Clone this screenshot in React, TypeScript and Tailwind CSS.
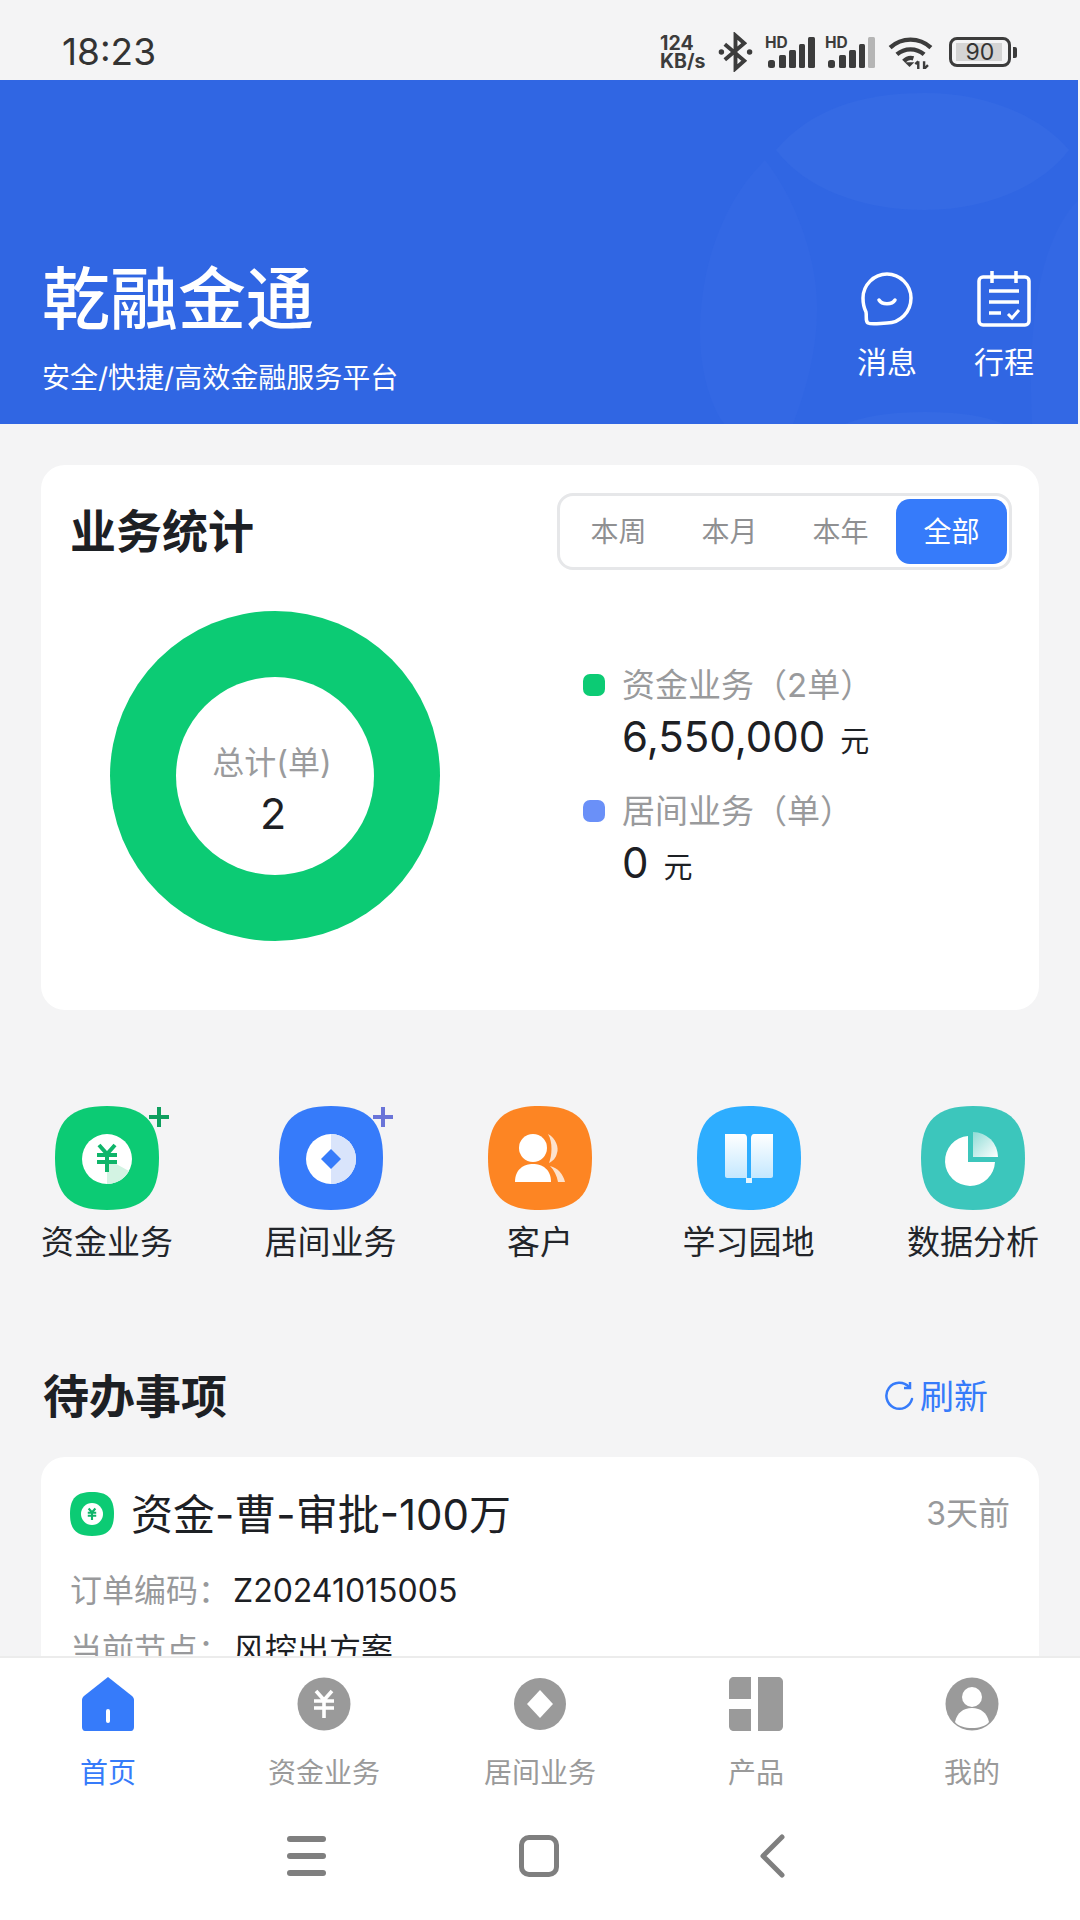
import React from "react";

const CJK = "font-['Inter','Noto_Sans_CJK_SC',sans-serif]";

function Squircle({ fill, children }: { fill: string; children?: React.ReactNode }) {
  return (
    <svg viewBox="0 0 104 104" className="w-[104px] h-[104px] block">
      <path d="M52 0C88 0 104 14 104 52C104 90 88 104 52 104C16 104 0 90 0 52C0 14 16 0 52 0Z" fill={fill} />
      {children}
    </svg>
  );
}

function Yen({ color, w = 3.6 }: { color: string; w?: number }) {
  return (
    <g stroke={color} strokeWidth={w} fill="none" strokeLinecap="butt">
      <path d="M-8 -13L0 -4L8 -13M-10 -3H10M-10 4H10M0 -4V14" />
    </g>
  );
}

function QuickIcon({ label, plus, center, children, fill }: { label: string; plus?: string; center: string; children?: React.ReactNode; fill: string }) {
  return (
    <div className={`flex flex-col items-center ${center}`}>
      <div className="relative w-[104px] h-[104px]">
        <Squircle fill={fill}>{children}</Squircle>
        {plus && (
          <svg viewBox="0 0 20 20" className="absolute right-[-10px] top-[1px] w-[20px] h-[20px]">
            <path d="M10 0V20M0 10H20" stroke={plus} strokeWidth="4" />
          </svg>
        )}
      </div>
      <div className="mt-[9px] text-[33px] leading-[46px] text-[#22252a] whitespace-nowrap">{label}</div>
    </div>
  );
}

function TabItem({ label, active, children }: { label: string; active?: boolean; children: React.ReactNode }) {
  return (
    <div className="flex-1 flex flex-col items-center">
      <div className="h-[54px] flex items-center justify-center">{children}</div>
      <div className={`mt-[24px] text-[28px] leading-[36px] ${active ? "text-[#367bfa]" : "text-[#9a9a9a]"}`}>{label}</div>
    </div>
  );
}

function Legend({ color, title, value }: { color: string; title: string; value: string }) {
  return (
    <div>
      <div className="flex items-center h-[48px]">
        <div className="w-[22px] h-[22px] rounded-[7px]" style={{ background: color }} />
        <div className="ml-[17px] text-[33px] text-[#999a9c] leading-[48px] whitespace-nowrap">{title}</div>
      </div>
      <div className="ml-[39px] flex items-baseline h-[56px]">
        <span className="text-[42px] leading-[56px] text-[#1d2024]">{value}</span>
        <span className="ml-[15px] text-[29px] text-[#1d2024]">元</span>
      </div>
    </div>
  );
}

function Signal({ last }: { last: string }) {
  return (
    <div className="relative w-[50px] h-[31px]">
      <span className="absolute left-[0px] top-[-3px] font-['Inter',sans-serif] font-bold text-[15.5px] leading-[18px]">HD</span>
      <svg viewBox="0 0 50 31" className="absolute inset-0 w-[50px] h-[31px]">
        <rect x="3" y="23" width="7" height="8" rx="2.5" fill="#3c3c3c" />
        <rect x="14" y="18" width="7" height="13" rx="1.5" fill="#3c3c3c" />
        <rect x="24" y="13" width="7" height="18" rx="1.5" fill="#3c3c3c" />
        <rect x="34" y="7" width="6" height="24" rx="1.5" fill="#3c3c3c" />
        <rect x="43" y="0" width="7" height="31" rx="1.5" fill={last} />
      </svg>
    </div>
  );
}

function StatusIcons() {
  return (
    <div className="flex items-center h-[40px] mr-[63px] text-[#3c3c3c]">
      <div className="w-[48px] flex flex-col items-start font-['Inter',sans-serif] font-bold text-[19.5px] leading-[18px]">
        <span>124</span>
        <span>KB/s</span>
      </div>
      <svg viewBox="0 0 36 40" className="w-[35px] h-[40px] ml-[10px]">
        <path d="M7 12L27 29L18 37V3L27 11L7 28" fill="none" stroke="#3c3c3c" strokeWidth="4" />
        <circle cx="3.5" cy="20" r="2.8" fill="#3c3c3c" />
        <circle cx="32.5" cy="20" r="2.8" fill="#3c3c3c" />
      </svg>
      <div className="ml-[12px]"><Signal last="#3c3c3c" /></div>
      <div className="ml-[10px]"><Signal last="#b5b5b5" /></div>
      <svg viewBox="0 0 46 34" className="w-[45px] h-[33px] ml-[13px]">
        <path d="M2 12C14 1 32 1 44 12" fill="none" stroke="#3c3c3c" strokeWidth="4.5" />
        <path d="M9 19C17 12 29 12 37 19" fill="none" stroke="#3c3c3c" strokeWidth="4.5" />
        <path d="M16 26C19 23 23 22 26 23" fill="none" stroke="#3c3c3c" strokeWidth="4.5" />
        <path d="M17 27H27L22 32Z" fill="#3c3c3c" />
        <path d="M31 26V34M37 26V34M28 29L31 26M37 34L41 30" stroke="#3c3c3c" strokeWidth="2.5" fill="none" />
      </svg>
      <div className="relative ml-[16px] w-[62px] h-[30px] rounded-[8px] border-[3px] border-[#3c3c3c] flex items-center justify-center">
        <div className="absolute left-[4px] top-[3px] bottom-[3px] right-[6px] bg-[#d4d4d4]" />
        <span className="relative font-['Inter',sans-serif] text-[23px] leading-[24px] text-[#333]">90</span>
      </div>
      <div className="w-[4px] h-[11px] rounded-r-[2px] bg-[#3c3c3c] ml-[2px]" />
    </div>
  );
}

function Header() {
  return (
    <div className="relative h-[344px] w-[1078px] bg-[#3066e3] overflow-hidden">
      <svg viewBox="0 0 1078 344" className="absolute inset-0 w-full h-full">
        <path d="M776 70C810 30 860 13 925 13C985 13 1040 35 1069 70C1040 108 985 130 925 130C860 130 805 108 776 70Z" fill="#356ae4" />
        <path d="M765 80C715 130 700 200 700 253C700 290 710 325 724 344H793C810 300 822 250 815 200C808 150 785 105 765 80Z" fill="#3368e4" />
        <path d="M1078 120C1040 160 1027 240 1032 344H1078Z" fill="#3368e4" />
        <path d="M845 344C865 336 890 332 925 332C960 332 985 336 1004 344Z" fill="#356ae4" />
      </svg>
      <div className="relative h-full flex justify-between">
        <div className="ml-[42px] flex flex-col pt-[179px]">
          <div className="text-[68px] leading-[80px] text-white font-medium whitespace-nowrap">乾融金通</div>
          <div className="mt-[19px] text-[28px] leading-[40px] text-white whitespace-nowrap">安全/快捷/高效金融服务平台</div>
        </div>
        <div className="flex mr-[44px] pt-[191px] gap-[57px]">
          <div className="flex flex-col items-center w-[60px]">
            <svg viewBox="0 0 54 56" className="w-[54px] h-[56px] block">
              <path d="M27 3C40 3 51 14 51 27C51 41 40 52 27 52C21 52 12 54 8 52C5 50 7 46 6 41C4 37 3 32 3 27C3 14 14 3 27 3Z" fill="none" stroke="white" strokeWidth="3.5" />
              <path d="M19 29C22 34 32 34 35 29" fill="none" stroke="white" strokeWidth="3.5" strokeLinecap="round" />
            </svg>
            <div className="mt-[15px] text-[30px] leading-[40px] text-white whitespace-nowrap">消息</div>
          </div>
          <div className="flex flex-col items-center w-[60px]">
            <svg viewBox="0 0 54 56" className="w-[54px] h-[56px] block">
              <rect x="2" y="6" width="50" height="48" rx="4" fill="none" stroke="white" strokeWidth="3.5" />
              <path d="M15 0V12M39 0V12M12 20H42M12 31H42M12 42H24" stroke="white" strokeWidth="3.5" />
              <path d="M31 43L35 47L42 39" fill="none" stroke="white" strokeWidth="3" />
            </svg>
            <div className="mt-[15px] text-[30px] leading-[40px] text-white whitespace-nowrap">行程</div>
          </div>
        </div>
      </div>
    </div>
  );
}

function StatsCard() {
  return (
    <div className="mt-[41px] mx-[41px] h-[545px] bg-white rounded-[24px] pt-[28px] px-[29px]">
      <div className="flex justify-between items-center h-[77px]">
        <div className="text-[46px] font-bold text-[#1d2024]">业务统计</div>
        <div className="mr-[-2px] w-[455px] h-[77px] rounded-[16px] border-[3px] border-[#e6e7e9] flex items-center pl-[3px] pr-[2px] text-[28px] text-[#8f9092]">
          <div className="flex-1 text-center">本周</div>
          <div className="flex-1 text-center">本月</div>
          <div className="flex-1 text-center">本年</div>
          <div className="w-[111px] h-[65px] rounded-[14px] bg-[#367bfa] text-white flex items-center justify-center">全部</div>
        </div>
      </div>
      <div className="flex mt-[41px]">
        <div className="relative ml-[40px] w-[330px] h-[330px] rounded-full bg-[#0ccb74] flex items-center justify-center">
          <div className="w-[198px] h-[198px] rounded-full bg-white flex flex-col items-center justify-center">
            <div className="text-[32px] leading-[44px] text-[#9a9b9d] mt-[28px] ml-[-6px] whitespace-nowrap">总计(单)</div>
            <div className="text-[43px] leading-[52px] text-[#1d2024] mt-[2px] ml-[-4px]">2</div>
          </div>
        </div>
        <div className="ml-[143px] pt-[50px] flex flex-col gap-[22px]">
          <Legend color="#0ccb74" title="资金业务（2单）" value="6,550,000" />
          <Legend color="#6a90f8" title="居间业务（单）" value="0" />
        </div>
      </div>
    </div>
  );
}

function QuickRow() {
  return (
    <div className="relative mt-[96px] h-[170px] mx-[41px] flex justify-between">
      <QuickIcon label="资金业务" center="w-[132px]" fill="#0ccb74" plus="#0e9f5e">
        <circle cx="52" cy="53" r="25" fill="white" />
        <path d="M52 53V78A25 25 0 0 0 74 65Z" fill="#d3f3e3" />
        <g transform="translate(52 52)"><Yen color="#0fb56a" w={4} /></g>
      </QuickIcon>
      <QuickIcon label="居间业务" center="w-[132px] ml-[-1px]" fill="#367bfa" plus="#6a74d8">
        <circle cx="52" cy="53" r="25" fill="white" />
        <path d="M52 28A25 25 0 0 1 52 78Z" fill="#d9e4fb" />
        <path d="M52 43L62 53L52 63L42 53Z" fill="#367bfa" />
      </QuickIcon>
      <QuickIcon label="客户" center="w-[104px] ml-[-1px]" fill="#fd8523">
        <circle cx="45" cy="42" r="14" fill="white" />
        <path d="M27 76C27 63 36 58 45 58C54 58 63 63 63 76Z" fill="white" />
        <path d="M60 28C68 32 71 42 69 47C68 52 65 55 61 57C64 50 65 36 60 28Z" fill="#fde2cc" />
        <path d="M62 60C70 62 75 68 77 76H70C69 70 66 64 62 60Z" fill="#fde2cc" />
      </QuickIcon>
      <QuickIcon label="学习园地" center="w-[132px] ml-[-2px]" fill="#2dadff">
        <defs>
          <linearGradient id="bk" x1="0" y1="0" x2="0" y2="1">
            <stop offset="0" stopColor="#ffffff" />
            <stop offset="1" stopColor="#c4e8ff" />
          </linearGradient>
        </defs>
        <path d="M28 28H47C49 28 50 30 50 32V72H30C29 72 28 71 28 70Z" fill="url(#bk)" />
        <path d="M76 28H57C55 28 54 30 54 32V72H74C75 72 76 71 76 70Z" fill="url(#bk)" />
        <rect x="49" y="72" width="6" height="5" fill="#e6f6ff" />
      </QuickIcon>
      <QuickIcon label="数据分析" center="w-[132px]" fill="#3cc6bc">
        <defs>
          <linearGradient id="pie" x1="0" y1="0" x2="1" y2="1">
            <stop offset="0" stopColor="#8fdcd6" />
            <stop offset="1" stopColor="#ffffff" />
          </linearGradient>
        </defs>
        <path d="M47 30V56H74A25 25 0 1 1 47 30Z" fill="white" />
        <path d="M52 26A25 25 0 0 1 77 51H52Z" fill="url(#pie)" />
      </QuickIcon>
    </div>
  );
}

function Todo() {
  return (
    <div className="mt-[89px]">
      <div className="mx-[43px] flex items-center justify-between h-[62px]">
        <div className="text-[46px] font-bold text-[#1d2024]">待办事项</div>
        <div className="flex items-center mr-[49px] text-[#367bfa] text-[34px]">
          <svg viewBox="0 0 30 32" className="w-[30px] h-[32px] mr-[6px]">
            <path d="M25 7A13 13 0 1 0 28 19" fill="none" stroke="#367bfa" strokeWidth="2.5" strokeLinecap="round" />
            <path d="M20 8H26V2" fill="none" stroke="#367bfa" strokeWidth="2.5" />
          </svg>
          刷新
        </div>
      </div>
      <div className="mt-[30px] mx-[41px] h-[300px] bg-white rounded-[24px] px-[29px] pt-[27px]">
        <div className="flex items-center h-[60px]">
          <svg viewBox="0 0 104 104" className="w-[44px] h-[44px]">
            <path d="M52 0C88 0 104 14 104 52C104 90 88 104 52 104C16 104 0 90 0 52C0 14 16 0 52 0Z" fill="#0ccb74" />
            <circle cx="52" cy="52" r="26" fill="white" />
            <g transform="translate(52 52)"><Yen color="#0fb56a" w={5} /></g>
          </svg>
          <div className="ml-[17px] text-[42px] text-[#1d2024] whitespace-nowrap">资金-曹-审批-100万</div>
          <div className="ml-auto text-[32px] text-[#98999b]">3天前</div>
        </div>
        <div className="mt-[22px] flex items-center h-[50px] text-[32px]">
          <span className="text-[#98999b] w-[163px] whitespace-nowrap">订单编码：</span>
          <span className="text-[#1d2024]">Z20241015005</span>
        </div>
        <div className="mt-[9px] flex items-center h-[50px] text-[32px]">
          <span className="text-[#98999b] w-[163px] whitespace-nowrap">当前节点：</span>
          <span className="text-[#1d2024]">风控出方案</span>
        </div>
      </div>
    </div>
  );
}

function TabBar() {
  return (
    <div className="h-[264px] shrink-0 bg-white border-t-2 border-[#ececec] flex flex-col">
      <div className="flex pt-[19px] h-[166px]">
        <TabItem label="首页" active>
          <svg viewBox="0 0 52 54" className="w-[52px] h-[54px]">
            <path d="M26 0L50 19C51 20 52 21 52 23V50C52 52 51 54 49 54H3C1 54 0 52 0 50V23C0 21 1 20 2 19Z" fill="#367bfa" />
            <rect x="24" y="32" width="4" height="14" rx="2" fill="white" />
          </svg>
        </TabItem>
        <TabItem label="资金业务">
          <svg viewBox="0 0 54 54" className="w-[54px] h-[54px]">
            <circle cx="27" cy="27" r="26.5" fill="#9a9a9a" />
            <g transform="translate(27 27)"><Yen color="white" w={3.6} /></g>
          </svg>
        </TabItem>
        <TabItem label="居间业务">
          <svg viewBox="0 0 54 54" className="w-[54px] h-[54px]">
            <circle cx="27" cy="27" r="26" fill="#9a9a9a" />
            <path d="M27 13L40 27L27 41L14 27Z" fill="white" />
          </svg>
        </TabItem>
        <TabItem label="产品">
          <svg viewBox="0 0 54 54" className="w-[54px] h-[54px]">
            <path d="M5 0H22V22H0V5C0 2 2 0 5 0Z" fill="#9a9a9a" />
            <path d="M0 32H22V54H5C2 54 0 52 0 49Z" fill="#9a9a9a" />
            <path d="M29 0H49C52 0 54 2 54 5V49C54 52 52 54 49 54H29Z" fill="#9a9a9a" />
          </svg>
        </TabItem>
        <TabItem label="我的">
          <svg viewBox="0 0 54 54" className="w-[54px] h-[54px]">
            <circle cx="27" cy="27" r="26.5" fill="#9a9a9a" />
            <circle cx="27" cy="20" r="10" fill="white" />
            <path d="M10 45C12 36 18 31 27 31C36 31 42 36 44 45C41 49 34 51 27 51C20 51 13 49 10 45Z" fill="white" />
          </svg>
        </TabItem>
      </div>
      <div className="flex items-center h-[44px] mt-[10px] pl-[287px]">
        <div className="w-[39px] flex flex-col gap-[11px]">
          <div className="h-[6px] rounded-[3px] bg-[#7f7f7f]" />
          <div className="h-[6px] rounded-[3px] bg-[#7f7f7f]" />
          <div className="h-[6px] rounded-[3px] bg-[#7f7f7f]" />
        </div>
        <div className="w-[40px] h-[42px] ml-[193px] rounded-[10px] border-[5px] border-[#7f7f7f]" />
        <svg viewBox="0 0 26 44" className="w-[26px] h-[44px] ml-[200px]">
          <path d="M23 3L4 22L23 41" fill="none" stroke="#7f7f7f" strokeWidth="5" strokeLinecap="round" strokeLinejoin="round" />
        </svg>
      </div>
    </div>
  );
}

export default function App() {
  return (
    <div className={`w-[1080px] h-[1920px] overflow-hidden bg-[#f4f4f5] flex flex-col ${CJK}`}>
      <div className="h-[80px] shrink-0 flex items-center justify-between pt-[24px]">
        <div className="ml-[62px] text-[37px] leading-[46px] text-[#333] font-['Inter',sans-serif]">18:23</div>
        <StatusIcons />
      </div>
      <div className="flex-1 min-h-0 overflow-hidden">
        <Header />
        <StatsCard />
        <QuickRow />
        <Todo />
      </div>
      <TabBar />
    </div>
  );
}
